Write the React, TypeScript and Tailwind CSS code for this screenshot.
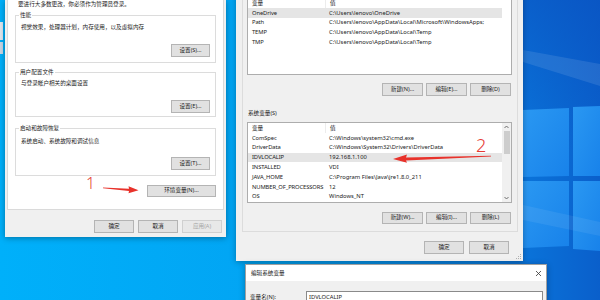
import React from "react";

const userVars = [
  ["OneDrive", "C:\\Users\\lenovo\\OneDrive"],
  ["Path", "C:\\Users\\lenovo\\AppData\\Local\\Microsoft\\WindowsApps;"],
  ["TEMP", "C:\\Users\\lenovo\\AppData\\Local\\Temp"],
  ["TMP", "C:\\Users\\lenovo\\AppData\\Local\\Temp"],
];

const sysVars = [
  ["ComSpec", "C:\\Windows\\system32\\cmd.exe"],
  ["DriverData", "C:\\Windows\\System32\\Drivers\\DriverData"],
  ["IDVLOCALIP", "192.168.1.100"],
  ["INSTALLED", "VDI"],
  ["JAVA_HOME", "C:\\Program Files\\Java\\jre1.8.0_211"],
  ["NUMBER_OF_PROCESSORS", "12"],
  ["OS", "Windows_NT"],
];

function Btn({
  children,
  w = "w-[40px]",
  h = "h-[13px]",
  disabled = false,
}: {
  children: React.ReactNode;
  w?: string;
  h?: string;
  disabled?: boolean;
}) {
  return (
    <div
      className={`${w} ${h} flex items-center justify-center border text-[5.6px] leading-none ${
        disabled
          ? "border-[#d0d0d0] bg-[#e8e8e8] text-[#a6a6a6]"
          : "border-[#b4b4b4] bg-[#e1e1e1] text-[#222]"
      }`}
    >
      {children}
    </div>
  );
}

function Group({
  title,
  text,
  button,
  h,
  textMt,
  btnMt,
}: {
  title: string;
  text: string;
  button: string;
  h: string;
  textMt: string;
  btnMt: string;
}) {
  return (
    <fieldset className={`${h} border border-[#dcdcdc] px-[4px] flex flex-col`}>
      <legend className="ml-[-1px] px-[1px] text-[5.6px] leading-[8px]">
        {title}
      </legend>
      <p className={`${textMt} text-[5.6px] leading-[8px] pl-[1px]`}>{text}</p>
      <div className={`${btnMt} flex justify-end pr-[1px]`}>
        <Btn w="w-[39px]">{button}</Btn>
      </div>
    </fieldset>
  );
}

function Chevron({ up }: { up?: boolean }) {
  return (
    <svg width="9" height="8" viewBox="0 0 9 8">
      <path
        d={up ? "M2.5 5 L4.5 3 L6.5 5" : "M2.5 3 L4.5 5 L6.5 3"}
        fill="none"
        stroke="#606060"
        strokeWidth="0.9"
      />
    </svg>
  );
}

function VarList({
  rows,
  selected,
  h,
  scroll,
}: {
  rows: string[][];
  selected: string;
  h: string;
  scroll?: boolean;
}) {
  return (
    <div className={`${h} flex border border-[#adadad] bg-white text-[5.8px] text-[#1a1a1a]`}>
      <div className="flex-1 flex flex-col overflow-hidden">
        <div className="flex h-[10px] items-center shrink-0 text-[5.6px]">
          <span className="w-[77px] pl-[4px]">变量</span>
          <span className="pl-[4px] border-l border-[#ececec] h-full flex items-center">值</span>
        </div>
        {rows.map(([k, v]) => (
          <div
            key={k}
            className={`flex h-[9.8px] items-center shrink-0 whitespace-nowrap ${
              k === selected ? "bg-[#e5e5e5]" : ""
            }`}
          >
            <span className="w-[77px] pl-[4px] tracking-[-0.1px]">{k}</span>
            <span className="pl-[4px]">{v}</span>
          </div>
        ))}
      </div>
      {scroll ? (
        <div className="w-[9px] bg-[#f0f0f0] flex flex-col items-center">
          <Chevron up />
          <div className="w-[6px] h-[23px] bg-[#cdcdcd]" />
          <div className="flex-1" />
          <Chevron />
        </div>
      ) : (
        <div className="w-[9px]" />
      )}
    </div>
  );
}

function Wallpaper() {
  return (
    <svg className="absolute inset-0" width="600" height="300" viewBox="0 0 600 300">
      <defs>
        <linearGradient id="bg" x1="0" y1="0" x2="1" y2="0">
          <stop offset="0" stopColor="#00b0fa" />
          <stop offset="0.45" stopColor="#02a4f3" />
          <stop offset="0.8" stopColor="#0a7fe2" />
          <stop offset="1" stopColor="#0a5fcb" />
        </linearGradient>
        <linearGradient id="top" x1="0" y1="0" x2="0" y2="1">
          <stop offset="0" stopColor="#0a4fbf" stopOpacity="0.55" />
          <stop offset="0.5" stopColor="#0a4fbf" stopOpacity="0" />
        </linearGradient>
        <linearGradient id="pane" x1="0" y1="0" x2="1" y2="1">
          <stop offset="0" stopColor="#2a98f2" />
          <stop offset="1" stopColor="#1882ea" />
        </linearGradient>
      </defs>
      <rect width="600" height="300" fill="url(#bg)" />
      <rect x="400" width="200" height="300" fill="url(#top)" />
      <polygon points="523,50 600,64 600,86 523,62" fill="#ffffff" opacity="0.1" />
      <polygon points="523,110 569,108 569,176 523,177" fill="url(#pane)" />
      <polygon points="573,107 600,106 600,176 573,176" fill="url(#pane)" />
      <polygon points="523,181 569,181 569,246 523,248" fill="url(#pane)" />
      <polygon points="573,181 600,181 600,251 573,249" fill="url(#pane)" />
      <polygon points="523,205 600,222 600,236 523,220" fill="#ffffff" opacity="0.07" />
      <rect x="0" y="22" width="3" height="18" fill="#dfe7ef" />
      <rect x="0" y="42" width="3" height="12" fill="#c9d6e4" />
    </svg>
  );
}

export default function App() {
  return (
    <div className="relative w-[600px] h-[300px] overflow-hidden font-['Noto_Sans','Noto_Sans_CJK_SC',sans-serif] text-[#1a1a1a]">
      <Wallpaper />

      {/* system properties */}
      <div className="absolute left-[5px] top-0 w-[221px] h-[237px] bg-[#f0f0f0] shadow-[0_1px_6px_rgba(0,0,0,0.35)] flex flex-col">
        <div className="h-[210px] mx-[2px] bg-white border-x border-b border-[#dadada] px-[7px] flex flex-col">
          <p className="pl-[3px] h-[8px] text-[5.6px] leading-[8px]">
            要进行大多数更改，你必须作为管理员登录。
          </p>
          <div className="mt-[3px]">
            <Group
              title="性能"
              text="视觉效果，处理器计划，内存使用，以及虚拟内存"
              button="设置(S)..."
              h="h-[52px]"
              textMt="mt-[4px]"
              btnMt="mt-[13px]"
            />
          </div>
          <div className="mt-[5px]">
            <Group
              title="用户配置文件"
              text="与登录帐户相关的桌面设置"
              button="设置(E)..."
              h="h-[49px]"
              textMt="mt-[3px]"
              btnMt="mt-[13px]"
            />
          </div>
          <div className="mt-[7px]">
            <Group
              title="启动和故障恢复"
              text="系统启动、系统故障和调试信息"
              button="设置(T)..."
              h="h-[52px]"
              textMt="mt-[5px]"
              btnMt="mt-[12px]"
            />
          </div>
          <div className="mt-[9px] flex justify-end">
            <Btn w="w-[69px]" h="h-[12px]">环境变量(N)...</Btn>
          </div>
        </div>
        <div className="mt-[10px] flex justify-end gap-[4px] pr-[4px]">
          <Btn>确定</Btn>
          <Btn>取消</Btn>
          <Btn disabled>应用(A)</Btn>
        </div>
      </div>

      {/* environment variables */}
      <div className="absolute left-[236px] top-[-6px] w-[287px] h-[267px] bg-[#f0f0f0] shadow-[0_1px_6px_rgba(0,0,0,0.3)] flex flex-col">
        <div className="ml-[6px] mr-[5px] h-[238px] border-x border-b border-[#dcdcdc] pl-[4px] pr-[5px] pt-[3px] flex flex-col">
          <VarList rows={userVars} selected="OneDrive" h="h-[78px]" />
          <div className="mt-[8px] flex justify-end gap-[3px] pr-[1px]">
            <Btn w="w-[41px]">新建(N)...</Btn>
            <Btn w="w-[41px]">编辑(E)...</Btn>
            <Btn w="w-[41px]">删除(D)</Btn>
          </div>
          <p className="mt-[13px] h-[8px] text-[5.6px] leading-[8px] pl-[1px]">系统变量(S)</p>
          <div className="mt-[5px]">
            <VarList rows={sysVars} selected="IDVLOCALIP" h="h-[81px]" scroll />
          </div>
          <div className="mt-[9px] flex justify-end gap-[3px] pr-[1px]">
            <Btn w="w-[41px]" h="h-[12px]">新建(W)...</Btn>
            <Btn w="w-[41px]" h="h-[12px]">编辑(I)...</Btn>
            <Btn w="w-[41px]" h="h-[12px]">删除(L)</Btn>
          </div>
        </div>
        <div className="mt-[9px] flex justify-end gap-[5px] pr-[14px]">
          <Btn>确定</Btn>
          <Btn>取消</Btn>
        </div>
        <svg className="absolute right-[1px] bottom-[1px]" width="6" height="6" viewBox="0 0 6 6">
          <rect x="4" y="0" width="1" height="1" fill="#b0b0b0" />
          <rect x="2" y="2" width="1" height="1" fill="#b0b0b0" />
          <rect x="4" y="2" width="1" height="1" fill="#b0b0b0" />
          <rect x="0" y="4" width="1" height="1" fill="#b0b0b0" />
          <rect x="2" y="4" width="1" height="1" fill="#b0b0b0" />
          <rect x="4" y="4" width="1" height="1" fill="#b0b0b0" />
        </svg>
      </div>

      {/* edit system variable */}
      <div className="absolute left-[245px] top-[264px] w-[302px] h-[60px] bg-[#f0f0f0] border border-[#a0a0a0] shadow-[0_1px_6px_rgba(0,0,0,0.3)] flex flex-col">
        <div className="h-[16px] bg-white flex items-center justify-between pl-[5px] pr-[4px]">
          <span className="text-[5.6px]">编辑系统变量</span>
          <svg width="7" height="7" viewBox="0 0 7 7">
            <path d="M1 1 L6 6 M6 1 L1 6" stroke="#333" strokeWidth="0.8" />
          </svg>
        </div>
        <div className="mt-[10px] flex items-center pl-[4px] pr-[3px]">
          <span className="w-[56px] text-[5.6px]">变量名(N):</span>
          <div className="flex-1 h-[12px] bg-white border border-[#8a8a8a] flex items-center pl-[2px] text-[5.8px]">
            IDVLOCALIP
          </div>
        </div>
      </div>

      {/* annotations */}
      <span className="absolute left-[86px] top-[175px] text-[16px] leading-none font-light text-[#e53b33] font-['Noto_Sans',sans-serif]">
        1
      </span>
      <span className="absolute left-[476px] top-[136px] text-[18px] leading-none font-light text-[#e53b33] font-['Noto_Sans',sans-serif]">
        2
      </span>
      <svg className="absolute inset-0 pointer-events-none" width="600" height="300" viewBox="0 0 600 300">
        <polygon
          points="103,187.5 129,188.7 128.5,186.3 138.5,190.2 128.5,193.2 129,190.9 103,188.3"
          fill="#e8322b"
        />
        <polygon
          points="491,155.8 406,157.4 407,154.6 393,159 407,162.8 406,160.6 491,156.6"
          fill="#e8322b"
        />
      </svg>
    </div>
  );
}
